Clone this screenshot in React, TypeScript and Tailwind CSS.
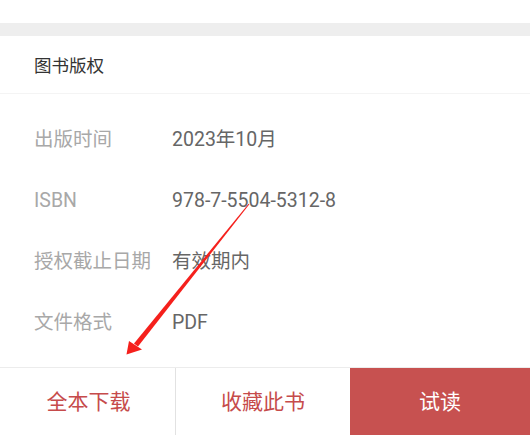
import React from "react";

const rows = [
  { k: "出版时间", v: "2023年10月" },
  { k: "ISBN", v: "978-7-5504-5312-8" },
  { k: "授权截止日期", v: "有效期内" },
  { k: "文件格式", v: "PDF" },
];

export default function App() {
  return (
    <div
      className="relative w-[530px] h-[435px] bg-white overflow-hidden"
      style={{ fontFamily: "Roboto, 'Noto Sans CJK SC', sans-serif" }}
    >
      <div className="h-[23px] bg-white" />
      <div className="h-[13px] bg-[#eeeeee]" />
      <div className="h-[58px] flex items-center pl-[34px] pt-[3px] border-b border-[#f4f4f4] text-[17.5px] text-[#333333]">
        图书版权
      </div>
      <div className="pt-[15px] pl-[34px]">
        {rows.map((r) => (
          <div key={r.k} className="h-[61px] flex items-center text-[19.5px]">
            <div className="w-[138px] text-[#a8a8a8]">{r.k}</div>
            <div className="text-[#666666]">{r.v}</div>
          </div>
        ))}
      </div>
      <div className="absolute left-0 right-0 bottom-0 h-[68px] flex border-t border-[#ececec] text-[21px]">
        <div className="w-[176px] flex items-center justify-center pt-[3px] pl-[2px] text-[#c64b4b] border-r border-[#e2e2e2]">
          全本下载
        </div>
        <div className="w-[174px] flex items-center justify-center pt-[3px] text-[#c64b4b]">
          收藏此书
        </div>
        <div className="flex-1 flex items-center justify-center pt-[3px] bg-[#c75150] text-white">
          试读
        </div>
      </div>
      <svg
        className="absolute left-0 top-0 pointer-events-none"
        width="530"
        height="435"
        viewBox="0 0 530 435"
      >
        <polygon
          points="249.4,204.3 248.6,203.7 134.0,343.4 138.0,346.6"
          fill="#f5201c"
        />
        <polygon points="126.5,354.5 129,341 142,349.5" fill="#f5201c" />
      </svg>
    </div>
  );
}
